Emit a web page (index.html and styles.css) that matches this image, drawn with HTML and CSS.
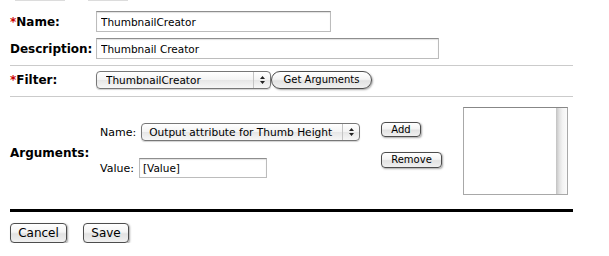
FILE: index.html
```html
<!DOCTYPE html>
<html>
<head>
<meta charset="utf-8">
<link rel="stylesheet" href="styles.css">
</head>
<body>
<div class="page">
  <div class="stubs"><span class="stub s1"></span><span class="stub s2"></span></div>

  <div class="row r-name">
    <label class="lbl"><span class="req">*</span>Name:</label>
    <input class="input w-name" type="text" value="ThumbnailCreator">
  </div>
  <div class="row r-desc">
    <label class="lbl">Description:</label>
    <input class="input w-desc" type="text" value="Thumbnail Creator">
  </div>

  <div class="sep sep1"></div>

  <div class="row r-filter">
    <label class="lbl"><span class="req">*</span>Filter:</label>
    <div class="select sel-filter">
      <span class="sel-text">ThumbnailCreator</span>
      <span class="sel-arrows"><svg width="7" height="10" viewBox="0 0 7 10"><path d="M3.5 1 L6 4 L1 4 Z M3.5 9 L6 6 L1 6 Z" fill="#222"/></svg></span>
    </div>
    <button class="btn pill btn-get">Get Arguments</button>
  </div>

  <div class="sep sep2"></div>

  <div class="args">
    <label class="lbl lbl-args">Arguments:</label>
    <div class="arg-fields">
      <div class="arg-row arg-row1">
        <span class="arg-lbl">Name:</span>
        <div class="select sel-arg">
          <span class="sel-text">Output attribute for Thumb Height</span>
          <span class="sel-arrows"><svg width="7" height="10" viewBox="0 0 7 10"><path d="M3.5 1 L6 4 L1 4 Z M3.5 9 L6 6 L1 6 Z" fill="#222"/></svg></span>
        </div>
      </div>
      <div class="arg-row arg-row2">
        <span class="arg-lbl">Value:</span>
        <input class="input w-value" type="text" value="[Value]">
      </div>
    </div>
    <div class="arg-buttons">
      <button class="btn small btn-add">Add</button>
      <button class="btn small btn-remove">Remove</button>
    </div>
    <div class="listbox">
      <div class="list-area"></div>
      <div class="list-scroll"></div>
    </div>
  </div>

  <div class="thick"></div>

  <div class="footer">
    <button class="btn big btn-cancel">Cancel</button>
    <button class="btn big btn-save">Save</button>
  </div>
</div>
</body>
</html>
```

FILE: styles.css
```css
html, body {
  margin: 0;
  padding: 0;
  background: #fff;
}
body {
  font-family: "DejaVu Sans", Verdana, sans-serif;
  color: #000;
}
.page {
  padding-left: 10px;
  width: 563px;
}
.stubs {
  display: flex;
  height: 1px;
}
.stub {
  height: 1px;
  background: #dcdcdc;
}
.s1 { margin-left: 5px; width: 50px; }
.s2 { margin-left: 23px; width: 40px; }

.row {
  display: flex;
  align-items: center;
}
.lbl {
  flex: none;
  width: 86px;
  font-weight: bold;
  font-size: 12px;
}
.req { color: #cc0000; }

.r-name { margin-top: 10px; }
.r-desc { margin-top: 6px; }

.input {
  box-sizing: border-box;
  height: 21px;
  margin: 0;
  border: 1px solid #bcbcbc;
  border-top-color: #8e8e8e;
  box-shadow: inset 0 1px 1px rgba(0,0,0,0.12);
  padding: 0 0 0 4px;
  font-family: "DejaVu Sans", sans-serif;
  font-size: 10.5px;
  color: #000;
  background: #fff;
  outline: none;
}
.w-name { width: 235px; }
.w-desc { width: 343px; }

.sep {
  height: 1px;
  background: #cbcbcb;
}
.sep1 { margin-top: 6px; }
.r-filter { margin-top: 5px; }
.sep2 { margin-top: 7px; }

.select {
  box-sizing: border-box;
  display: flex;
  align-items: center;
  height: 18px;
  border: 1px solid #777;
  border-radius: 4px;
  background: linear-gradient(#ffffff, #f3f3f3 50%, #e6e6e6 51%, #f7f7f7);
  box-shadow: 0 1px 1px rgba(0,0,0,0.18);
  font-size: 10.5px;
  color: #000;
}
.sel-text {
  flex: 1;
  white-space: nowrap;
  overflow: hidden;
}
.sel-arrows {
  flex: none;
  width: 16px;
  height: 16px;
  border-left: 1px solid #c4c4c4;
  display: flex;
  align-items: center;
  justify-content: center;
}
.sel-filter {
  width: 175px;
  padding-left: 9px;
}
.sel-arg {
  width: 219px;
  padding-left: 7px;
  font-size: 10.6px;
}

.btn {
  box-sizing: border-box;
  margin: 0;
  padding: 0;
  border: 1px solid #4d4d4d;
  border-radius: 4px;
  background: linear-gradient(#ffffff, #f4f4f4 45%, #e2e2e2 55%, #f0f0f0);
  box-shadow: 1px 1px 2px rgba(0,0,0,0.35);
  font-family: "DejaVu Sans", sans-serif;
  color: #000;
  text-align: center;
  line-height: 1;
}
.pill { border-radius: 9px; }
.btn-get {
  width: 101px;
  height: 18px;
  font-size: 10px;
}
.small { font-size: 10px; }

.args {
  display: flex;
  align-items: flex-start;
  padding-top: 10px;
}
.lbl-args {
  align-self: center;
  margin-top: 4px;
}
.arg-fields {
  flex: none;
  width: 261px;
  padding-left: 4px;
}
.arg-row {
  display: flex;
  align-items: center;
  font-size: 11px;
}
.arg-row1 { margin-top: 16px; }
.arg-row2 { margin-top: 17px; }
.arg-row1 .arg-lbl { margin-right: 5px; }
.arg-row2 .arg-lbl { margin-right: 5px; }
.w-value {
  width: 128px;
  height: 20px;
  padding-left: 3px;
}

.arg-buttons {
  flex: none;
  width: 61px;
  margin-left: 20px;
  display: flex;
  flex-direction: column;
  align-items: flex-start;
}
.btn-add {
  margin-top: 15px;
  width: 40px;
  height: 15px;
}
.btn-remove {
  margin-top: 15px;
  width: 61px;
  height: 16px;
}

.listbox {
  flex: none;
  box-sizing: border-box;
  margin-left: 21px;
  width: 105px;
  height: 88px;
  border: 1px solid #a8a8a8;
  border-top-color: #878787;
  display: flex;
  background: #fff;
}
.list-area { flex: 1; }
.list-scroll {
  width: 11px;
  background: linear-gradient(90deg, #c2c2c2, #e2e2e2 30%, #f3f3f3 60%, #fbfbfb);
}

.thick {
  margin-top: 14px;
  height: 3px;
  background: #000;
}

.footer {
  display: flex;
  margin-top: 11px;
}
.big {
  height: 20px;
  font-size: 12px;
}
.btn-cancel { width: 57px; }
.btn-save { width: 46px; margin-left: 16px; }
```
